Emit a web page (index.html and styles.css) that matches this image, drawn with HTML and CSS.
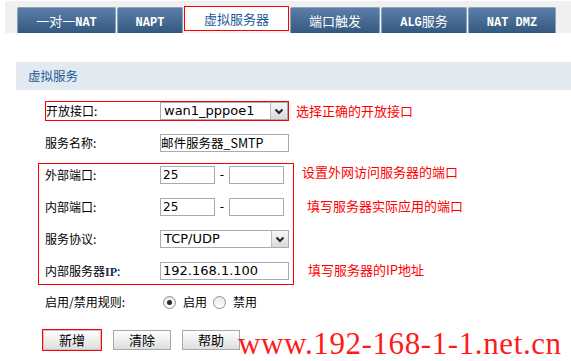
FILE: index.html
```html
<!DOCTYPE html>
<html lang="zh-CN">
<head>
    <meta charset="UTF-8">
    <title>虚拟服务器</title>
    <link rel="stylesheet" href="styles.css">
</head>
<body>
    <div class="tabs">
        <div class="tab t1">一对一<b>NAT</b></div>
        <div class="tab t2"><b>NAPT</b></div>
        <div class="tab t3 active">虚拟服务器</div>
        <div class="tab t4">端口触发</div>
        <div class="tab t5"><b>ALG</b>服务</div>
        <div class="tab t6"><b>NAT DMZ</b></div>
    </div>

    <div class="panel-title">虚拟服务</div>

    <div class="form">
        <div class="row first">
            <div class="boxed">
                <span class="label">开放接口:</span>
                <div class="select narrow">
                    <span class="value big">wan1_pppoe1</span>
                    <span class="arrow"><svg width="10" height="7" viewBox="0 0 10 7"><path d="M1.5 1.5 L5 5 L8.5 1.5" fill="none" stroke="#1b2433" stroke-width="2"/></svg></span>
                </div>
            </div>
            <span class="note n0">选择正确的开放接口</span>
        </div>

        <div class="row second">
            <span class="label">服务名称:</span>
            <div class="input wide flush">邮件服务器_SMTP</div>
        </div>

        <div class="group-wrap">
            <div class="group">
                <div class="row">
                    <span class="label">外部端口:</span>
                    <div class="input port">25</div>
                    <span class="dash">-</span>
                    <div class="input port"></div>
                </div>
                <div class="row">
                    <span class="label">内部端口:</span>
                    <div class="input port">25</div>
                    <span class="dash">-</span>
                    <div class="input port"></div>
                </div>
                <div class="row">
                    <span class="label">服务协议:</span>
                    <div class="select wide">
                        <span class="value">TCP/UDP</span>
                        <span class="arrow"><svg width="10" height="7" viewBox="0 0 10 7"><path d="M1.5 1.5 L5 5 L8.5 1.5" fill="none" stroke="#1b2433" stroke-width="2"/></svg></span>
                    </div>
                </div>
                <div class="row">
                    <span class="label">内部服务器<em>IP</em>:</span>
                    <div class="input wide big">192.168.1.100</div>
                </div>
            </div>
            <div class="notes">
                <span class="note n1">设置外网访问服务器的端口</span>
                <span class="note n2">填写服务器实际应用的端口</span>
                <span class="note n3">填写服务器的IP地址</span>
            </div>
        </div>

        <div class="row radios">
            <span class="label">启用/禁用规则:</span>
            <span class="radio checked"></span><span class="radio-text">启用</span>
            <span class="radio second-radio"></span><span class="radio-text">禁用</span>
        </div>

        <div class="buttons">
            <div class="btn-mark"><div class="btn">新增</div></div>
            <div class="btn">清除</div>
            <div class="btn">帮助</div>
        </div>
    </div>

    <div class="watermark">www.192-168-1-1.net.cn</div>
</body>
</html>
```

FILE: styles.css
```css
body {
    margin: 0;
    font-family: "Noto Sans CJK SC", "DejaVu Sans", sans-serif;
    font-size: 12px;
    color: #000;
    background: #fff;
    position: relative;
    height: 361px;
    overflow: hidden;
}

/* tab strip */
.tabs {
    display: flex;
    align-items: flex-start;
    gap: 1px;
    margin: 1px 0 0 5px;
    padding-left: 12px;
    height: 32px;
    background: #f0f0f0;
}

.tab {
    box-sizing: border-box;
    height: 26px;
    margin-top: 6px;
    line-height: 25px;
    text-align: center;
    color: #fff;
    font-size: 13px;
    background: linear-gradient(#5a7ea8, #34597f);
    border: 1px solid #8aa2bd;
    border-bottom: none;
    border-radius: 2px 2px 0 0;
}

.tab b {
    font-family: "Liberation Mono", monospace;
    font-size: 12px;
    font-weight: bold;
}

.t1 { width: 99px; }
.t2 { width: 66px; }
.t3 { width: 105px; }
.t4 { width: 90px; }
.t5 { width: 86px; }
.t6 { width: 88px; }

.tab.active {
    height: 25px;
    margin-top: 5px;
    background: #fff;
    border: 1px solid #ff0000;
    border-radius: 0;
    color: #1d5a98;
    line-height: 23px;
}

/* section header */
.panel-title {
    margin: 29px 0 0 16px;
    height: 28px;
    line-height: 28px;
    padding-left: 12px;
    background: #e2e9f0;
    color: #1d5a98;
    font-size: 12.5px;
}

/* form */
.form {
    padding-left: 45px;
    margin-top: 11px;
}

.row {
    display: flex;
    align-items: center;
    height: 18px;
}

.label {
    width: 115px;
    flex: none;
    line-height: 18px;
}

.label em {
    font-style: normal;
    font-family: "Liberation Serif", serif;
    font-weight: bold;
    color: #1b2a55;
}

.row.first {
    height: 20px;
}

.boxed {
    box-sizing: border-box;
    display: flex;
    align-items: center;
    width: 244px;
    height: 20px;
    border: 1px solid #ff0000;
}

.boxed .label {
    width: 114px;
}

.row.second {
    margin-top: 13px;
}

.input,
.select {
    box-sizing: border-box;
    height: 18px;
    border: 1px solid #a5acb2;
    background: #fff;
    line-height: 16px;
    font-family: "DejaVu Sans", "Noto Sans CJK SC", sans-serif;
    font-size: 12px;
    padding-left: 2px;
    white-space: nowrap;
    overflow: hidden;
}

.input.flush {
    padding-left: 0;
    font-family: "Noto Sans CJK SC", "DejaVu Sans", sans-serif;
    font-size: 12.5px;
}

.big,
.select .value {
    font-size: 13px;
}

.wide { width: 129px; }
.narrow { width: 128px; }
.port { width: 55px; }

.dash {
    width: 14px;
    text-align: center;
    font-family: "DejaVu Sans", sans-serif;
}

.select {
    display: flex;
    justify-content: space-between;
    padding-left: 3px;
}

.arrow {
    box-sizing: border-box;
    width: 17px;
    height: 16px;
    display: flex;
    align-items: center;
    justify-content: center;
    background: linear-gradient(#f7f7f7, #d9d9d9);
    border-left: 1px solid #b9bec3;
}

/* grouped rows with red outline */
.group-wrap {
    display: flex;
    margin: 11px 0 0 -7px;
}

.group {
    box-sizing: border-box;
    width: 256px;
    border: 1px solid #ff0000;
    padding: 2px 4px 4px 6px;
    display: flex;
    flex-direction: column;
    gap: 14px;
}

.notes {
    display: flex;
    flex-direction: column;
    align-items: flex-start;
}

.note {
    color: #ff0000;
    font-size: 13px;
    line-height: 18px;
    white-space: nowrap;
}

.n0 { margin-left: 7px; }
.n1 { margin-left: 8px; }
.n2 { margin: 16px 0 0 13px; }
.n3 { margin: 46px 0 0 14px; }

/* radios */
.row.radios {
    margin-top: 8px;
}

.radio {
    box-sizing: border-box;
    width: 13px;
    height: 13px;
    margin-left: 3px;
    border: 1px solid #8f8f8f;
    border-radius: 50%;
    background: linear-gradient(#e9e9e9, #ffffff);
    display: flex;
    align-items: center;
    justify-content: center;
}

.radio.checked::after {
    content: "";
    width: 5px;
    height: 5px;
    border-radius: 50%;
    background: #2b2b2b;
}

.radio.second-radio {
    margin-left: 6px;
}

.radio-text {
    margin-left: 7px;
    line-height: 18px;
}

/* buttons */
.buttons {
    display: flex;
    align-items: center;
    gap: 11px;
    margin: 18px 0 0 -3px;
}

.btn-mark {
    border: 1px solid #ff0000;
}

.btn {
    box-sizing: border-box;
    width: 58px;
    height: 20px;
    line-height: 18px;
    text-align: center;
    font-size: 13px;
    border: 1px solid #a8a8a8;
    background: linear-gradient(#fefefe, #dedede);
}

.btn-mark .btn {
    border-color: #c4c4c4;
}

/* site watermark over the corner */
.watermark {
    position: absolute;
    left: 238px;
    top: 328px;
    font-family: "Liberation Serif", serif;
    font-size: 31px;
    line-height: 31px;
    letter-spacing: 0.6px;
    color: #ff1a1a;
    white-space: nowrap;
}
```
